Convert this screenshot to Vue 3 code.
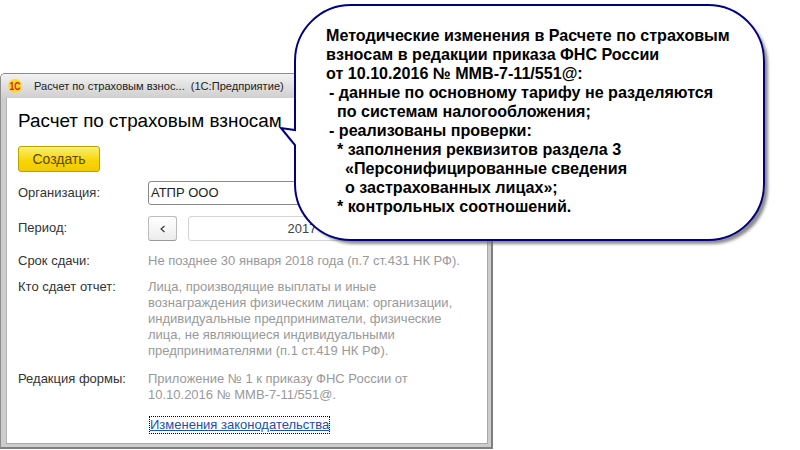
<script setup>
const calloutLines = [
  { text: 'Методические изменения в Расчете по страховым', cls: '' },
  { text: 'взносам в редакции приказа ФНС России', cls: '' },
  { text: 'от 10.10.2016 № ММВ-7-11/551@:', cls: '' },
  { text: '- данные по основному тарифу не разделяются', cls: 'dash' },
  { text: 'по системам налогообложения;', cls: 'sub' },
  { text: '- реализованы проверки:', cls: 'dash' },
  { text: '* заполнения реквизитов раздела 3', cls: 'star' },
  { text: '«Персонифицированные сведения', cls: 'deep' },
  { text: 'о застрахованных лицах»;', cls: 'deep' },
  { text: '* контрольных соотношений.', cls: 'star' }
]

const whoLines = [
  'Лица, производящие выплаты и иные',
  'вознаграждения физическим лицам: организации,',
  'индивидуальные предприниматели, физические',
  'лица, не являющиеся индивидуальными',
  'предпринимателями (п.1 ст.419 НК РФ).'
]

const bubble = 'M351 5 H708 A56 56 0 0 1 764 61 V184 A56 56 0 0 1 708 240 H351 A56 56 0 0 1 295 184 V145 L281 128 L295 130 V61 A56 56 0 0 1 351 5 Z'
</script>

<template>
  <div class="page">
    <div class="window">
      <div class="titlebar">
        <svg class="logo" width="16" height="16" viewBox="0 0 16 16">
          <circle cx="8" cy="8" r="7" fill="#fbd92e" />
          <text x="8" y="11.5" text-anchor="middle" textLength="11" lengthAdjust="spacingAndGlyphs" class="logo-text">1С</text>
        </svg>
        <span class="title-text">Расчет по страховым взнос...</span>
        <span class="title-app">(1С:Предприятие)</span>
      </div>

      <div class="content">
        <h1 class="heading">Расчет по страховым взносам</h1>
        <button class="create">Создать</button>

        <div class="form">
          <div class="label label-field">Организация:</div>
          <div class="org">АТПР ООО</div>

          <div class="label label-field">Период:</div>
          <div class="period">
            <button class="arrow">
              <svg width="8" height="8" viewBox="0 0 8 8"><path d="M5.5 1 L2 4 L5.5 7" fill="none" stroke="#333" stroke-width="1.1" /></svg>
            </button>
            <div class="year">2017</div>
          </div>

          <div class="label">Срок сдачи:</div>
          <div class="value term">Не позднее 30 января 2018 года (п.7 ст.431 НК РФ).</div>

          <div class="label">Кто сдает отчет:</div>
          <div class="value">
            <div v-for="line in whoLines" :key="line">{{ line }}</div>
          </div>

          <div class="label">Редакция формы:</div>
          <div class="value">
            <div>Приложение № 1 к приказу ФНС России от</div>
            <div>10.10.2016 № ММВ-7-11/551@.</div>
          </div>

          <div></div>
          <div class="link-row"><a class="link">Изменения законодательства</a></div>
        </div>
      </div>
    </div>

    <div class="callout">
      <svg class="bubble" width="800" height="260" viewBox="0 0 800 260">
        <defs>
          <filter id="soft" x="-5%" y="-5%" width="110%" height="115%">
            <feGaussianBlur stdDeviation="1.6" />
          </filter>
        </defs>
        <path :d="bubble" fill="#666" opacity="0.75" transform="translate(4 4)" filter="url(#soft)" />
        <path :d="bubble" fill="#fff" stroke="#00007f" stroke-width="2" />
      </svg>
      <div class="callout-text">
        <div v-for="line in calloutLines" :key="line.text" :class="line.cls">{{ line.text }}</div>
      </div>
    </div>
  </div>
</template>

<style scoped>
.page {
  position: relative;
  width: 800px;
  height: 450px;
  background: #fff;
  overflow: hidden;
  font-family: "Liberation Sans", Arial, sans-serif;
}

.window {
  position: absolute;
  left: 0;
  top: 73px;
  width: 493px;
  height: 376px;
  box-sizing: border-box;
  border: 1px solid #8c8c8c;
  border-right: 2px solid #808080;
  border-bottom: 2px solid #808080;
  border-radius: 5px 5px 0 0;
  background: #cdcdcd;
  display: flex;
  flex-direction: column;
  padding: 0 3px 3px 5px;
}

.titlebar {
  height: 24px;
  flex: none;
  margin: 0 -3px 0 -5px;
  padding-left: 6px;
  display: flex;
  align-items: center;
  border-radius: 4px 4px 0 0;
  background: linear-gradient(#f2f2f2, #cfcfcf);
  font-size: 11.1px;
  color: #222;
}

.logo {
  flex: none;
}

.logo-text {
  font-size: 10px;
  font-weight: bold;
  fill: #d8231f;
}

.title-text {
  margin-left: 11px;
}

.title-app {
  margin-left: 6px;
}

.content {
  flex: 1;
  background: #fff;
  border: 1px solid #a8a8a8;
  border-top: none;
  border-left-color: #b4b4b4;
  padding: 12px 0 0 11px;
}

.heading {
  margin: 0;
  font-size: 18.85px;
  line-height: 22px;
  font-weight: normal;
  color: #000;
}

.create {
  display: block;
  margin-top: 14px;
  width: 82px;
  height: 26px;
  padding: 0;
  border: 1px solid #b8a100;
  border-radius: 3px;
  background: linear-gradient(#fcee70, #f8d400 60%, #f2cb00);
  font: 14px "Liberation Sans", Arial, sans-serif;
  color: #5a4a00;
}

.form {
  margin-top: 9px;
  display: grid;
  grid-template-columns: 130px 1fr;
  font-size: 13px;
  line-height: 16px;
  color: #333;
}

.label-field {
  padding-top: 4px;
}

.org {
  height: 24px;
  box-sizing: border-box;
  border: 1px solid #8a8a8a;
  border-radius: 3px;
  padding: 3px 2px;
  font-size: 13px;
  color: #222;
  margin-bottom: 11px;
}

.period {
  display: flex;
  gap: 11px;
  margin-bottom: 12px;
}

.arrow {
  width: 29px;
  height: 25px;
  padding: 0;
  border: 1px solid #bbb;
  border-bottom-color: #999;
  border-radius: 3px;
  background: linear-gradient(#fff, #ececec);
  display: flex;
  align-items: center;
  justify-content: center;
}

.year {
  width: 228px;
  height: 25px;
  box-sizing: border-box;
  border: 1px solid #d4d4d4;
  border-radius: 3px;
  text-align: center;
  line-height: 23px;
  color: #444;
}

.value {
  color: #999;
  margin-bottom: 12px;
}

.term {
  margin-bottom: 10px;
}

.link-row {
  margin-top: 2px;
}

.link {
  display: inline-block;
  outline: 1px dotted #000;
  margin-left: 2px;
  color: #1c50b0;
  text-decoration: underline;
}

.callout {
  position: absolute;
  left: 0;
  top: 0;
  width: 800px;
  height: 260px;
}

.bubble {
  position: absolute;
  left: 0;
  top: 0;
}

.callout-text {
  position: absolute;
  left: 326px;
  top: 26px;
  font-size: 16.1px;
  line-height: 19px;
  font-weight: bold;
  color: #000;
  white-space: nowrap;
}

.dash {
  padding-left: 3px;
}

.sub {
  padding-left: 11px;
}

.star {
  padding-left: 11px;
}

.deep {
  padding-left: 19px;
}
</style>
